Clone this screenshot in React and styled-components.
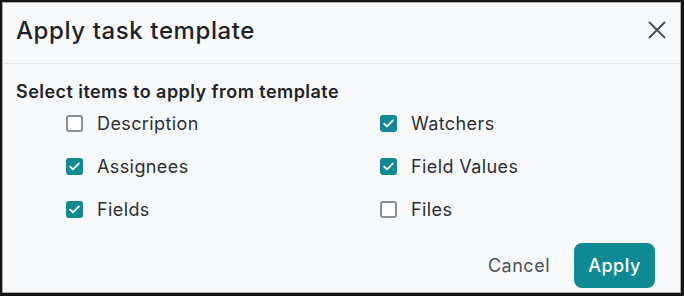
import React from 'react';
import styled, { createGlobalStyle } from 'styled-components';

const GlobalStyle = createGlobalStyle`
  html, body {
    margin: 0;
    padding: 0;
    background: #141414;
  }
  body {
    font-family: Inter, "Noto Sans", sans-serif;
  }
`;

const Frame = styled.div`
  width: 684px;
  height: 296px;
  box-sizing: border-box;
  padding: 2px 3px 3px 2px;
`;

const Dialog = styled.div`
  height: 100%;
  box-sizing: border-box;
  border: 1px solid #a7a9ab;
  background: #f8f9fa;
  display: flex;
  flex-direction: column;
`;

const Header = styled.div`
  height: 61px;
  box-sizing: border-box;
  display: flex;
  align-items: center;
  justify-content: space-between;
  padding: 0 12px 6px 13px;
  border-bottom: 1px solid #e3e5e8;
`;

const Title = styled.h1`
  margin: 0;
  font-size: 24px;
  font-weight: 500;
  color: #1f2329;
  letter-spacing: 0.6px;
`;

const CloseButton = styled.button`
  border: 0;
  background: none;
  padding: 0;
  width: 22px;
  height: 22px;
  display: flex;
  align-items: center;
  justify-content: center;
  color: #4b5058;
  cursor: pointer;
`;

const Body = styled.div`
  padding: 16px 13px 0;
`;

const SectionLabel = styled.div`
  font-size: 18px;
  font-weight: 600;
  color: #1f2329;
  line-height: 24px;
  letter-spacing: 0.45px;
`;

const Options = styled.div`
  display: grid;
  grid-template-columns: 314px 1fr;
  row-gap: 19px;
  padding: 7px 0 0 50px;
`;

const Option = styled.label`
  display: flex;
  align-items: center;
  gap: 14px;
  height: 24px;
  font-size: 18px;
  letter-spacing: 0.4px;
  color: #2b2f35;
  cursor: pointer;
`;

const Box = styled.span`
  width: 17px;
  height: 17px;
  box-sizing: border-box;
  border-radius: 3px;
  display: flex;
  align-items: center;
  justify-content: center;
  background: ${p => (p.$checked ? '#0d8a93' : '#ffffff')};
  border: ${p => (p.$checked ? 'none' : '2px solid #8b9098')};
`;

const Footer = styled.div`
  margin-top: auto;
  display: flex;
  justify-content: flex-end;
  align-items: center;
  gap: 24px;
  padding: 0 25px 4px 0;
`;

const CancelButton = styled.button`
  border: 0;
  background: none;
  font-family: inherit;
  font-size: 18px;
  letter-spacing: 0.5px;
  color: #4b5058;
  padding: 0;
  cursor: pointer;
`;

const ApplyButton = styled.button`
  border: 0;
  width: 81px;
  height: 45px;
  border-radius: 8px;
  background: #0d8a93;
  color: #ffffff;
  font-family: inherit;
  font-size: 18px;
  font-weight: 500;
  letter-spacing: 0.5px;
  cursor: pointer;
`;

const items = [
  { label: 'Description', checked: false },
  { label: 'Watchers', checked: true },
  { label: 'Assignees', checked: true },
  { label: 'Field Values', checked: true },
  { label: 'Fields', checked: true },
  { label: 'Files', checked: false },
];

const Checkbox = ({ checked }) => (
  <Box $checked={checked}>
    {checked && (
      <svg width="11" height="9" viewBox="0 0 11 9" fill="none">
        <path d="M1.2 4.6 L4 7.3 L9.8 1.5" stroke="#fff" strokeWidth="1.8" strokeLinecap="round" strokeLinejoin="round" />
      </svg>
    )}
  </Box>
);

const App = () => (
  <Frame>
    <GlobalStyle />
    <Dialog>
      <Header>
        <Title>Apply task template</Title>
        <CloseButton aria-label="Close">
          <svg width="18" height="18" viewBox="0 0 18 18">
            <path d="M1.5 1.5 L16.5 16.5 M16.5 1.5 L1.5 16.5" stroke="currentColor" strokeWidth="2" strokeLinecap="round" />
          </svg>
        </CloseButton>
      </Header>
      <Body>
        <SectionLabel>Select items to apply from template</SectionLabel>
        <Options>
          {items.map(item => (
            <Option key={item.label}>
              <Checkbox checked={item.checked} />
              {item.label}
            </Option>
          ))}
        </Options>
      </Body>
      <Footer>
        <CancelButton>Cancel</CancelButton>
        <ApplyButton>Apply</ApplyButton>
      </Footer>
    </Dialog>
  </Frame>
);

export default App;
